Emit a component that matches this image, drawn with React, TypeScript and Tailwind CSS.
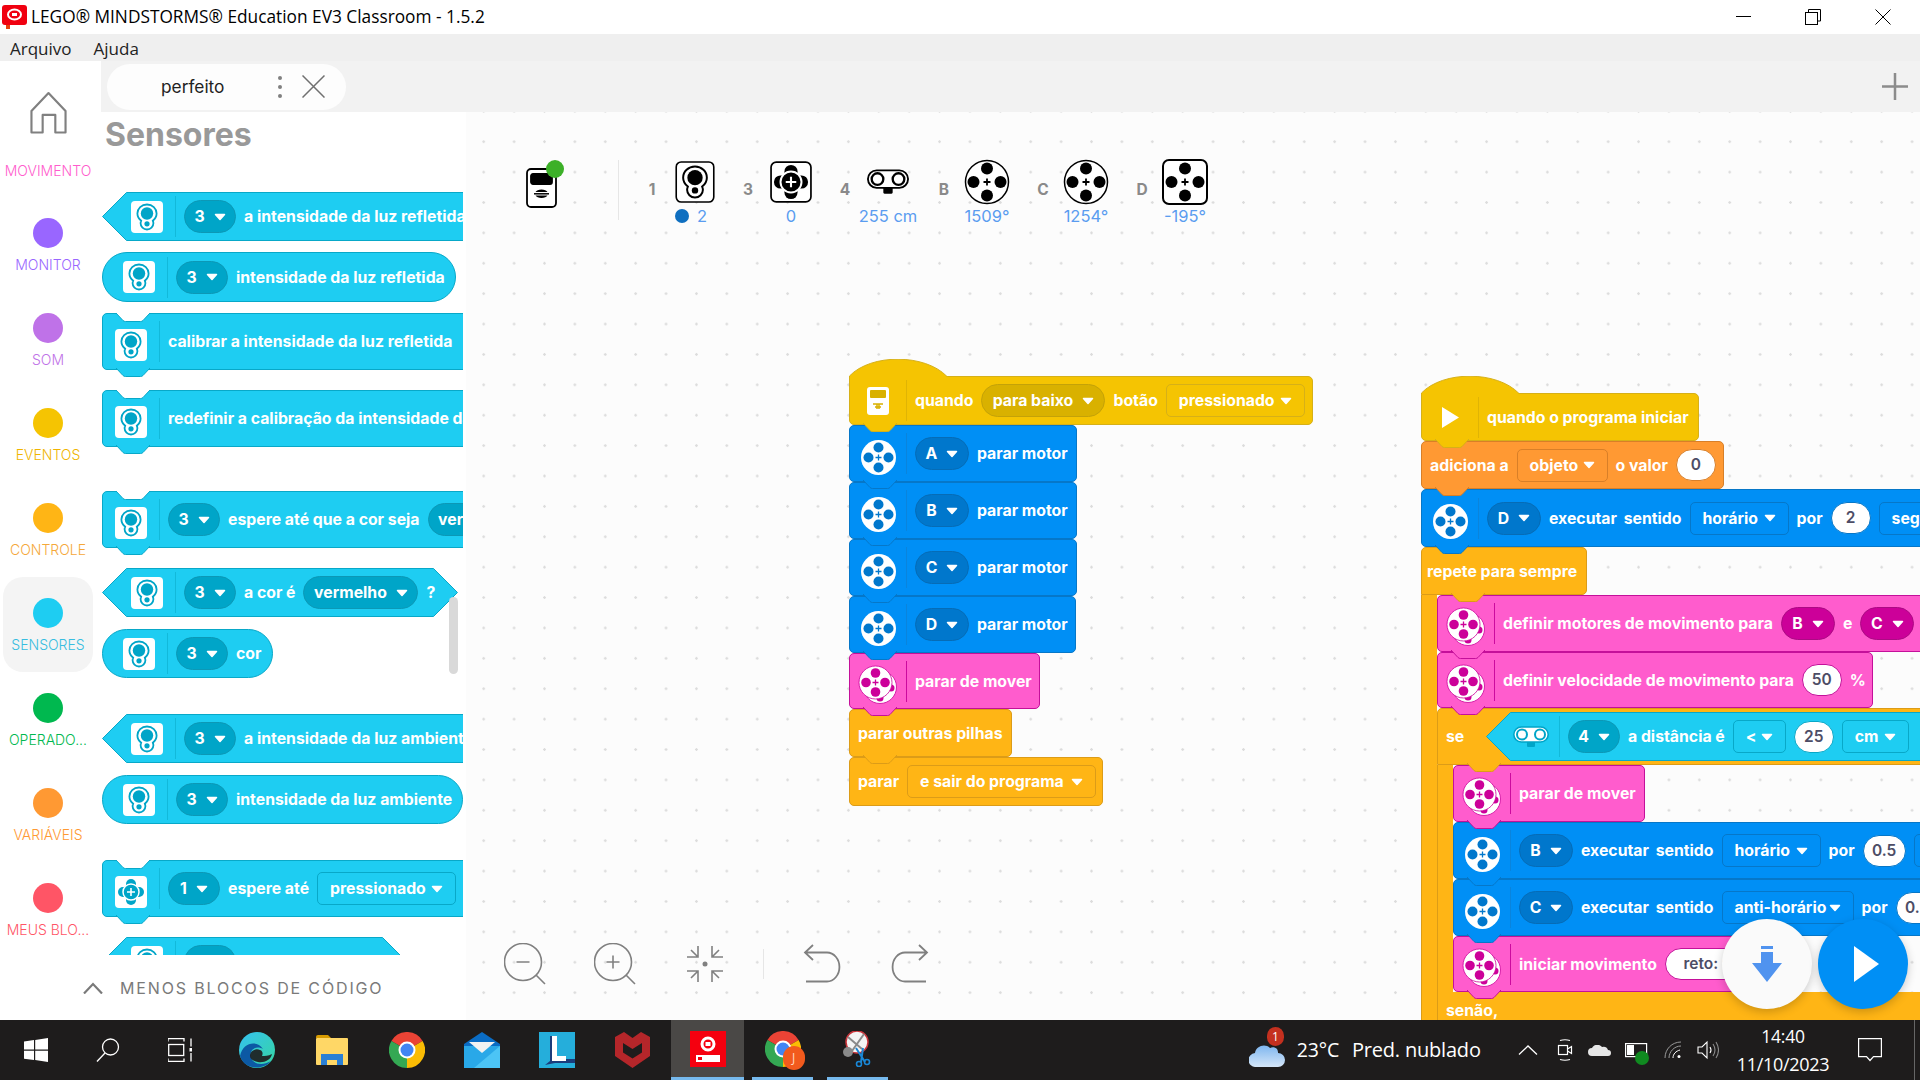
import type { ReactNode } from "react";
import clsx from "clsx";

type Theme = { bg: string; border: string; fill: string; stroke: string; rule: string; pill: string; ink: string };

const cyan: Theme = { bg: "bg-[#1ecdf2]", border: "border-[#08a8c8]", fill: "#1ecdf2", stroke: "#08a8c8", rule: "bg-[#12b9da]", pill: "bg-[#00a5c8] border-[#0c98b6]", ink: "#00a5c8" };
const blue: Theme = { bg: "bg-[#008ff5]", border: "border-[#0677c8]", fill: "#008ff5", stroke: "#0677c8", rule: "bg-[#0a84dc]", pill: "bg-[#0077cc] border-[#066cb6]", ink: "#0077cc" };
const pink: Theme = { bg: "bg-[#ff5ccd]", border: "border-[#c4109a]", fill: "#ff5ccd", stroke: "#c4109a", rule: "bg-[#cc0a9e]", pill: "bg-[#cc0099] border-[#ac0a84]", ink: "#cc0099" };
const yellow: Theme = { bg: "bg-[#f5c402]", border: "border-[#d6b018]", fill: "#f5c402", stroke: "#d6b018", rule: "bg-[#e0b404]", pill: "bg-[#d9b100] border-[#c4a208]", ink: "#d9b100" };
const amber: Theme = { bg: "bg-[#ffb515]", border: "border-[#dc9c18]", fill: "#ffb515", stroke: "#dc9c18", rule: "bg-[#e5a214]", pill: "bg-[#e59e10] border-[#cf9010]", ink: "#e59e10" };
const orange: Theme = { bg: "bg-[#ff9933]", border: "border-[#d87f28]", fill: "#ff9933", stroke: "#d87f28", rule: "bg-[#e58a2c]", pill: "bg-[#e5842a] border-[#cc7524]", ink: "#e5842a" };

const txt = "whitespace-nowrap pt-px text-[15.8px] font-bold text-white";

function Caret() {
  return (
    <svg width="12" height="8" viewBox="0 0 12 8" className="shrink-0">
      <path d="M1.5 1.5h9L6 6.5z" fill="#fff" stroke="#fff" strokeWidth="1.5" strokeLinejoin="round" />
    </svg>
  );
}

function Pill({ t, label, className }: { t: Theme; label: string; className?: string }) {
  return (
    <div className={clsx("flex h-[33px] shrink-0 items-center justify-center gap-[9px] rounded-full border", t.pill, className ?? "w-[54px]")}>
      <span className={txt}>{label}</span>
      <Caret />
    </div>
  );
}

function Drop({ t, label, className }: { t: Theme; label: string; className: string }) {
  return (
    <div className={clsx("flex h-[33px] shrink-0 items-center justify-between rounded-[5px] border px-[12px]", t.bg, t.border, className)}>
      <span className={txt}>{label}</span>
      <Caret />
    </div>
  );
}

function Value({ label, t, className }: { label: string; t: Theme; className?: string }) {
  return (
    <div className={clsx("flex h-[32px] shrink-0 items-center justify-center whitespace-nowrap rounded-full border bg-white text-[15.5px] font-semibold text-[#4d4d66]", t.border, className ?? "w-[41px]")}>
      {label}
    </div>
  );
}

function Bump({ t, left }: { t: Theme; left: string }) {
  return (
    <svg width="34" height="10" viewBox="0 0 34 10" className={clsx("absolute -bottom-[9px] z-10", left)}>
      <path d="M0 0h34l-7 7.5q-1 1-2.5 1h-15q-1.5 0-2.5-1z" fill={t.fill} />
      <path d="M0 0l7 7.5q1 1 2.5 1h15q1.5 0 2.5-1l7-7.5" fill="none" stroke={t.stroke} />
    </svg>
  );
}

function Notch({ t, left }: { t: Theme; left: string }) {
  return (
    <svg width="34" height="10" viewBox="0 0 34 10" className={clsx("absolute -top-px", left)}>
      <path d="M0 0h34l-7 7.5q-1 1-2.5 1h-15q-1.5 0-2.5-1z" fill="#fff" />
      <path d="M0 0l7 7.5q1 1 2.5 1h15q1.5 0 2.5-1l7-7.5" fill="none" stroke={t.stroke} />
    </svg>
  );
}

// the coloured cell with the icon and the thin rule after it
function IconCell({ t, icon, className }: { t: Theme; icon: ReactNode; className: string }) {
  return (
    <>
      <div className={clsx("flex shrink-0 items-center justify-center", className)}>{icon}</div>
      <div className={clsx("mr-[8px] h-[41px] w-px shrink-0", t.rule)} />
    </>
  );
}

function Stack({ t, className, icon, notch, bump = "left-[13px]", noBump, cell = "w-[56px] pt-[7px]", children }: { t: Theme; className: string; icon?: ReactNode; notch?: boolean; bump?: string; noBump?: boolean; cell?: string; children: ReactNode }) {
  return (
    <div className={clsx("relative flex shrink-0 items-center gap-[8px] rounded-[5px] border", t.bg, t.border, className)}>
      {notch && <Notch t={t} left="left-[13px]" />}
      <div className="flex h-full items-center">
        {icon && <IconCell t={t} icon={icon} className={cell} />}
        <div className="flex items-center gap-[8px]">{children}</div>
      </div>
      {!noBump && <Bump t={t} left={bump} />}
    </div>
  );
}

function Hat({ t, className, icon, children }: { t: Theme; className: string; icon: ReactNode; children: ReactNode }) {
  return (
    <div className="relative mt-[17px]">
      <svg width="99" height="19" viewBox="0 0 99 19" className="absolute -top-[17px] left-0 z-10">
        <path d="M.5 18.5V17C22-5.5 76-5.5 98 17.5l1 1z" fill={t.fill} />
        <path d="M.5 18.5V17C22-5.5 76-5.5 98 17.5" fill="none" stroke={t.stroke} />
      </svg>
      <Stack t={t} className={clsx("rounded-tl-none", className)} icon={icon} cell="w-[56px]">
        {children}
      </Stack>
    </div>
  );
}

function Hex({ t, w, className, icon, children }: { t: Theme; w: number; className: string; icon: ReactNode; children: ReactNode }) {
  return (
    <div className={clsx("relative flex h-[49px] shrink-0 items-center", className)}>
      <svg width={w} height="49" className="absolute left-0 top-0">
        <polygon points={`.5,24.5 24.5,.5 ${w - 24.5},.5 ${w - 0.5},24.5 ${w - 24.5},48.5 24.5,48.5`} fill={t.fill} stroke={t.stroke} />
      </svg>
      <div className="relative flex h-full items-center">
        <IconCell t={t} icon={icon} className="w-[73px] pl-[17px]" />
        <div className="flex items-center gap-[8px]">{children}</div>
      </div>
    </div>
  );
}

function Round({ className, icon, children }: { className: string; icon: ReactNode; children: ReactNode }) {
  return (
    <div className={clsx("flex shrink-0 items-center rounded-full border", cyan.bg, cyan.border, className)}>
      <IconCell t={cyan} icon={icon} className="w-[64px] pl-[8px]" />
      <div className="flex items-center gap-[8px]">{children}</div>
    </div>
  );
}

function ColorShape({ c, thin }: { c: string; thin?: boolean }) {
  return (
    <>
      <path d="M16 3.5c5.4 0 9.6 4 9.6 9 0 3-1.6 5.400-3.800 7.200.4 1 .6 1.700.6 2.600 0 3.400-2.800 6.200-6.400 6.200s-6.400-2.800-6.400-6.200c0-.9.2-1.600.6-2.600-2.200-1.800-3.800-4.200-3.800-7.200 0-5 4.200-9 9.600-9z" fill="none" stroke={c} strokeWidth={thin ? 1.6 : 1.8} />
      <circle cx="16" cy="12.500" r="6.200" fill={c} />
      <circle cx="16" cy="22.800" r="2.600" fill={c} />
    </>
  );
}

function ColorIcon({ c }: { c: string }) {
  return (
    <svg width="32" height="32" viewBox="0 0 32 32" className="rounded-[4px] bg-white">
      <ColorShape c={c} />
    </svg>
  );
}

function ForceShape({ c, hole }: { c: string; hole: string }) {
  return (
    <>
      <rect x="11" y="3" width="10" height="26" rx="5" fill={c} />
      <rect x="3" y="11" width="26" height="10" rx="5" fill={c} />
      <circle cx="16" cy="16" r="8" fill={c} stroke={hole} strokeWidth="1.500" />
      <path d="M16 12v8M12 16h8" stroke={hole} strokeWidth="1.600" />
    </>
  );
}

function MotorIcon({ c }: { c: string }) {
  return (
    <svg width="35" height="35" viewBox="0 0 35 35">
      <circle cx="17.500" cy="17.500" r="17.500" fill="#fff" />
      <circle cx="17.500" cy="7.500" r="5" fill={c} />
      <circle cx="17.500" cy="27.500" r="5" fill={c} />
      <circle cx="7.500" cy="17.500" r="5" fill={c} />
      <circle cx="27.500" cy="17.500" r="5" fill={c} />
      <path d="M17.500 14.500v6M14.500 17.500h6" stroke={c} strokeWidth="1.300" />
    </svg>
  );
}

function MoveIcon() {
  const c = "#cc0099";
  return (
    <svg width="40" height="40" viewBox="0 0 40 40">
      <circle cx="22" cy="22" r="16.500" fill="#fff" stroke={c} strokeWidth=".8" />
      <circle cx="33" cy="23" r="3.500" fill={c} />
      <circle cx="22" cy="33" r="3.500" fill={c} />
      <circle cx="17.500" cy="17.500" r="16.500" fill="#fff" stroke={c} strokeWidth=".8" />
      <circle cx="17.500" cy="8" r="4.800" fill={c} />
      <circle cx="17.500" cy="27" r="4.800" fill={c} />
      <circle cx="8" cy="17.500" r="4.800" fill={c} />
      <circle cx="27" cy="17.500" r="4.800" fill={c} />
      <path d="M17.500 14.500v6M14.500 17.500h6" stroke={c} strokeWidth="1.300" />
    </svg>
  );
}

function DistanceIcon({ bg, fg }: { bg: string; fg: string }) {
  return (
    <svg width="36" height="24" viewBox="0 0 36 24">
      <rect x="14" y="15" width="8" height="7" rx="1" fill={bg === "#fff" ? fg : "#000"} />
      <rect x=".8" y="2" width="34.400" height="15" rx="7.500" fill={bg} stroke={fg} strokeWidth="1.600" />
      <circle cx="9" cy="9.500" r="5" fill="none" stroke={fg} strokeWidth="2" />
      <circle cx="27" cy="9.500" r="5" fill="none" stroke={fg} strokeWidth="2" />
    </svg>
  );
}

function BrickIcon() {
  return (
    <svg width="22" height="28" viewBox="0 0 22 28">
      <rect width="22" height="28" rx="3" fill="#fff" />
      <rect x="3" y="3" width="16" height="8" rx="1" fill="#d9b100" />
      <path d="M6 17h10M8 20h6M10 17v5M12 17v5" stroke="#d9b100" strokeWidth="1.500" />
    </svg>
  );
}

const colorIc = <ColorIcon c={cyan.ink} />;
const forceIc = (
  <svg width="32" height="32" viewBox="0 0 32 32" className="rounded-[4px] bg-white">
    <ForceShape c={cyan.ink} hole="#fff" />
  </svg>
);
const blueIc = <MotorIcon c={blue.ink} />;
const moveIc = <MoveIcon />;

function Home() {
  return (
    <svg width="37" height="43" viewBox="0 0 38 44" fill="none" stroke="#808080" strokeWidth="2.200" strokeLinejoin="round">
      <path d="M1.500 20.500 19 2l17.500 18.500V42.500H26V24.500H13V42.500H1.500z" />
    </svg>
  );
}

const railItems = [
  { label: "MONITOR", dot: "bg-[#9966ff]", text: "text-[#9966ff]" },
  { label: "SOM", dot: "bg-[#bf72e8]", text: "text-[#bf72e8]" },
  { label: "EVENTOS", dot: "bg-[#f5c402]", text: "text-[#f0b400]" },
  { label: "CONTROLE", dot: "bg-[#ffb515]", text: "text-[#f5a83a]" },
  { label: "SENSORES", dot: "bg-[#1ecdf2]", text: "text-[#38bde0]", active: true },
  { label: "OPERADO...", dot: "bg-[#00b84f]", text: "text-[#00b84f]" },
  { label: "VARIÁVEIS", dot: "bg-[#ff9933]", text: "text-[#ff9933]" },
  { label: "MEUS BLO...", dot: "bg-[#ff5566]", text: "text-[#ff5566]" },
];

function Rail() {
  return (
    <div className="flex w-[101px] shrink-0 flex-col bg-white">
      <div className="flex h-[136px] w-[96px] shrink-0 flex-col items-center">
        <div className="mt-[30px]">
          <Home />
        </div>
        <span className="mt-[27px] text-[14px] font-light leading-[20px] text-[#ff5ccd]">MOVIMENTO</span>
      </div>
      {railItems.map((it) => (
        <div key={it.label} className={clsx("ml-[3px] flex h-[95px] w-[90px] shrink-0 flex-col items-center rounded-[20px] pt-[21px]", it.active && "bg-[#f4f4f4]")}>
          <div className={clsx("h-[30px] w-[30px] rounded-full", it.dot)} />
          <span className={clsx("mt-[7px] whitespace-nowrap text-[14px] font-light leading-[20px]", it.text)}>{it.label}</span>
        </div>
      ))}
    </div>
  );
}

function Flyout() {
  return (
    <div className="relative flex w-[365px] shrink-0 flex-col bg-white">
      <div className="h-[80px] shrink-0 pl-[4px] pt-[4px] text-[32px] font-bold leading-[38px] text-[#999999]">Sensores</div>
      <div className="flex min-h-0 flex-1 flex-col overflow-hidden pl-px">
        <div className="w-[361px] shrink-0 overflow-hidden">
          <Hex t={cyan} w={420} className="w-[420px]" icon={colorIc}>
            <Pill t={cyan} label="3" className="w-[52px]" />
            <span className={txt}>a intensidade da luz refletida</span>
          </Hex>
        </div>
        <Round className="mt-[11px] h-[50px] w-[354px]" icon={colorIc}>
          <Pill t={cyan} label="3" className="w-[52px]" />
          <span className={txt}>intensidade da luz refletida</span>
        </Round>
        <div className="mt-[11px] h-[66px] w-[361px] shrink-0 overflow-hidden">
          <Stack t={cyan} notch className="h-[57px] w-[420px]" icon={colorIc}>
            <span className={txt}>calibrar a intensidade da luz refletida</span>
          </Stack>
        </div>
        <div className="mt-[11px] h-[66px] w-[361px] shrink-0 overflow-hidden">
          <Stack t={cyan} notch className="h-[57px] w-[420px]" icon={colorIc}>
            <span className={txt}>redefinir a calibração da intensidade da luz</span>
          </Stack>
        </div>
        <div className="mt-[35px] h-[66px] w-[361px] shrink-0 overflow-hidden">
          <Stack t={cyan} notch className="h-[57px] w-[420px]" icon={colorIc}>
            <Pill t={cyan} label="3" className="w-[52px]" />
            <span className={txt}>espere até que a cor seja</span>
            <Pill t={cyan} label="vermelho" className="w-[115px]" />
          </Stack>
        </div>
        <Hex t={cyan} w={356} className="mt-[11px] w-[356px]" icon={colorIc}>
          <Pill t={cyan} label="3" className="w-[52px]" />
          <span className={txt}>a cor é</span>
          <Pill t={cyan} label="vermelho" className="w-[115px]" />
          <span className={txt}>?</span>
        </Hex>
        <Round className="mt-[12px] h-[49px] w-[171px]" icon={colorIc}>
          <Pill t={cyan} label="3" className="w-[52px]" />
          <span className={txt}>cor</span>
        </Round>
        <div className="mt-[36px] w-[361px] shrink-0 overflow-hidden">
          <Hex t={cyan} w={420} className="w-[420px]" icon={colorIc}>
            <Pill t={cyan} label="3" className="w-[52px]" />
            <span className={txt}>a intensidade da luz ambiente</span>
          </Hex>
        </div>
        <Round className="mt-[12px] h-[49px] w-[361px]" icon={colorIc}>
          <Pill t={cyan} label="3" className="w-[52px]" />
          <span className={txt}>intensidade da luz ambiente</span>
        </Round>
        <div className="mt-[36px] h-[66px] w-[361px] shrink-0 overflow-hidden">
          <Stack t={cyan} notch className="h-[57px] w-[420px]" icon={forceIc}>
            <Pill t={cyan} label="1" className="w-[52px]" />
            <span className={txt}>espere até</span>
            <Drop t={cyan} label="pressionado" className="w-[139px]" />
          </Stack>
        </div>
        <Hex t={cyan} w={305} className="mt-[11px] w-[305px]" icon={colorIc}>
          <Pill t={cyan} label="1" className="w-[52px]" />
        </Hex>
      </div>
      <div className="-ml-[18px] flex h-[65px] shrink-0 items-center gap-[17px]">
        <svg width="20" height="12" viewBox="0 0 20 12" fill="none" stroke="#7a7a7a" strokeWidth="2.200">
          <path d="M1 11.500 10 2l9 9.500" />
        </svg>
        <span className="whitespace-nowrap text-[16px] tracking-[1.850px] text-[#7a7a7a]">MENOS BLOCOS DE CÓDIGO</span>
      </div>
      <div className="absolute left-[348px] top-[485px] h-[77px] w-[9px] rounded-full bg-[#d9d9d9]" />
    </div>
  );
}

function MotorRow({ label, className }: { label: string; className: string }) {
  return (
    <Stack t={blue} className={clsx("h-[57px]", className)} icon={blueIc}>
      <Pill t={blue} label={label} />
      <span className={txt}>parar motor</span>
    </Stack>
  );
}

function RunRow({ label, dir, dirW, value, valueW }: { label: string; dir: string; dirW: string; value: string; valueW: string }) {
  return (
    <Stack t={blue} className="h-[57px] w-[640px]" icon={blueIc}>
      <Pill t={blue} label={label} />
      <span className={clsx(txt, "[word-spacing:3px]")}>executar sentido</span>
      <Drop t={blue} label={dir} className={dirW} />
      <span className={txt}>por</span>
      <Value t={blue} label={value} className={valueW} />
      <Drop t={blue} label="segundos" className="w-[110px]" />
    </Stack>
  );
}

function FirstStack() {
  return (
    <div className="absolute left-[383px] top-[247px] flex flex-col items-start">
      <Hat t={yellow} className="h-[49px] w-[464px]" icon={<BrickIcon />}>
        <span className={txt}>quando</span>
        <Pill t={yellow} label="para baixo" className="w-[124px]" />
        <span className={txt}>botão</span>
        <Drop t={yellow} label="pressionado" className="w-[139px]" />
      </Hat>
      <MotorRow label="A" className="w-[228px]" />
      <MotorRow label="B" className="w-[228px]" />
      <MotorRow label="C" className="w-[228px]" />
      <MotorRow label="D" className="w-[227px]" />
      <Stack t={pink} className="h-[56px] w-[191px]" icon={moveIc}>
        <span className={txt}>parar de mover</span>
      </Stack>
      <Stack t={amber} className="h-[48px] w-[163px] pl-[8px]">
        <span className={txt}>parar outras pilhas</span>
      </Stack>
      <Stack t={amber} className="h-[49px] w-[254px] pl-[8px]" noBump>
        <span className={txt}>parar</span>
        <Drop t={amber} label="e sair do programa" className="w-[189px]" />
      </Stack>
    </div>
  );
}

function SecondStack() {
  return (
    <div className="absolute left-[955px] top-[264px] flex flex-col items-start">
      <Hat t={yellow} className="h-[48px] w-[278px]" icon={
        <svg width="17" height="21" viewBox="0 0 17 21"><path d="M0 0l17 10.500L0 21z" fill="#fff" /></svg>
      }>
        <span className={txt}>quando o programa iniciar</span>
      </Hat>
      <Stack t={orange} className="h-[48px] w-[303px] pl-[8px]">
        <span className={txt}>adiciona a</span>
        <Drop t={orange} label="objeto" className="w-[91px]" />
        <span className={txt}>o valor</span>
        <Value t={orange} label="0" className="w-[40px]" />
      </Stack>
      <Stack t={blue} className="h-[58px] w-[640px]" icon={blueIc}>
        <Pill t={blue} label="D" />
        <span className={clsx(txt, "[word-spacing:3px]")}>executar sentido</span>
        <Drop t={blue} label="horário" className="w-[99px]" />
        <span className={txt}>por</span>
        <Value t={blue} label="2" className="w-[40px]" />
        <Drop t={blue} label="segundos" className="w-[110px]" />
      </Stack>
      <Stack t={amber} className="z-[1] h-[48px] w-[166px] rounded-bl-none pl-[5px]" bump="left-[29px]">
        <span className={txt}>repete para sempre</span>
      </Stack>
      <div className="flex items-stretch">
        <div className={clsx("w-[16px] shrink-0 border-l", amber.bg, amber.border)} />
        <div className="flex flex-col items-start">
          <Stack t={pink} className="h-[57px] w-[640px]" icon={moveIc}>
            <span className={txt}>definir motores de movimento para</span>
            <Pill t={pink} label="B" />
            <span className={txt}>e</span>
            <Pill t={pink} label="C" />
          </Stack>
          <Stack t={pink} className="h-[56px] w-[436px]" icon={moveIc}>
            <span className={txt}>definir velocidade de movimento para</span>
            <Value t={pink} label="50" className="w-[40px]" />
            <span className={txt}>%</span>
          </Stack>
          <Stack t={amber} className="h-[57px] w-[640px] rounded-bl-none pl-[8px]" bump="left-[29px]">
            <span className={clsx(txt, "w-[32px]")}>se</span>
            <Hex t={cyan} w={640} className="w-[640px]" icon={<DistanceIcon bg="#fff" fg={cyan.ink} />}>
              <Pill t={cyan} label="4" className="w-[52px]" />
              <span className={txt}>a distância é</span>
              <Drop t={cyan} label="<" className="w-[53px]" />
              <Value t={cyan} label="25" className="w-[40px]" />
              <Drop t={cyan} label="cm" className="w-[67px]" />
            </Hex>
          </Stack>
          <div className="flex items-stretch">
            <div className={clsx("w-[16px] shrink-0 border-l", amber.bg, amber.border)} />
            <div className="flex flex-col items-start">
              <Stack t={pink} className="h-[57px] w-[192px]" icon={moveIc}>
                <span className={txt}>parar de mover</span>
              </Stack>
              <RunRow label="B" dir="horário" dirW="w-[99px]" value="0.5" valueW="w-[43px]" />
              <RunRow label="C" dir="anti-horário" dirW="w-[132px]" value="0.5" valueW="w-[43px]" />
              <Stack t={pink} className="h-[56px] w-[330px]" icon={moveIc}>
                <span className={txt}>iniciar movimento</span>
                <Value t={pink} label="reto: 0" className="w-[100px] pr-[14px]" />
              </Stack>
            </div>
          </div>
          <div className={clsx("h-[60px] w-[640px] border-l pl-[8px] pt-[6px]", amber.bg, amber.border)}>
            <span className={txt}>senão,</span>
          </div>
        </div>
      </div>
    </div>
  );
}

function Sensor({ port, value, dot, className, children }: { port: string; value: string; dot?: boolean; className: string; children: ReactNode }) {
  return (
    <div className={clsx("flex shrink-0", className)}>
      <div className="h-[46px] w-[18px] pt-[8px] text-center text-[15.5px] font-bold leading-[46px] text-[#8a8a8a]">{port}</div>
      <div className="ml-[4px] flex w-[60px] flex-col items-center">
        <div className="flex h-[46px] items-center">{children}</div>
        <div className="flex h-[22px] items-center gap-[8px] whitespace-nowrap text-[16.5px] leading-none text-[#5a9cf0]">
          {dot && <span className="ml-[-8px] h-[14px] w-[14px] rounded-full bg-[#0f6fc0]" />}
          {value}
        </div>
      </div>
    </div>
  );
}

function WheelShape({ square }: { square?: boolean }) {
  return (
    <svg width="46" height="46" viewBox="0 0 46 46">
      {square ? <rect x="1" y="1" width="44" height="44" rx="6" fill="#fff" stroke="#000" strokeWidth="2" /> : <ellipse cx="23" cy="23" rx="21.500" ry="21.500" fill="#fff" stroke="#000" strokeWidth="1.500" />}
      <circle cx="23" cy="9.500" r="6" />
      <circle cx="23" cy="36.500" r="6" />
      <circle cx="9.500" cy="23" r="6" />
      <circle cx="36.500" cy="23" r="6" />
      <path d="M23 19.500v7M19.500 23h7" stroke="#000" strokeWidth="1.800" />
    </svg>
  );
}

function StatusBar() {
  return (
    <div className="absolute left-[60px] top-[47px] flex items-start">
      <div className="relative mt-[9px] w-[88px]">
        <svg width="31" height="40" viewBox="0 0 31 40" fill="none" stroke="#000" strokeWidth="1.800">
          <rect x="1" y="1" width="29" height="38" rx="4" fill="#fff" />
          <rect x="5" y="6" width="21" height="10" rx="2" fill="#000" />
          <path d="M15.500 21.500c3 0 5 1 6 2.500h-12c1-1.500 3-2.500 6-2.500zM9.500 27.500h12c-1 1.500-3 2.500-6 2.500s-5-1-6-2.500z" fill="#000" stroke="none" />
          <path d="M8 25.800h15" strokeWidth="1.500" />
        </svg>
        <span className="absolute left-[20px] -top-[8px] h-[18px] w-[18px] rounded-full bg-[#3cb028]" />
        <span className="absolute left-[92px] -top-[8px] h-[60px] w-px bg-[#e6e6e6]" />
      </div>
      <div className="ml-[29px] flex">
        <Sensor port="1" value="2" dot className="w-[96px]">
          <svg width="40" height="42" viewBox="0 0 32 34">
            <rect x=".8" y=".8" width="30.400" height="32.400" rx="4" fill="#fff" stroke="#000" strokeWidth="1.300" />
            <g transform="translate(0 1)">
              <ColorShape c="#000" thin />
            </g>
          </svg>
        </Sensor>
        <Sensor port="3" value="0" className="w-[97px]">
          <svg width="42" height="42" viewBox="0 0 32 32">
            <rect x=".8" y=".8" width="30.400" height="30.400" rx="4" fill="#fff" stroke="#000" strokeWidth="1.300" />
            <ForceShape c="#000" hole="#fff" />
          </svg>
        </Sensor>
        <Sensor port="4" value="255 cm" className="w-[99px]">
          <svg width="42" height="28" viewBox="0 0 36 24">
            <rect x="14" y="15" width="8" height="7" rx="1" fill="#000" />
            <rect x=".8" y="2" width="34.400" height="15" rx="7.500" fill="#fff" stroke="#000" strokeWidth="1.600" />
            <circle cx="9" cy="9.500" r="5" fill="none" stroke="#000" strokeWidth="2" />
            <circle cx="27" cy="9.500" r="5" fill="none" stroke="#000" strokeWidth="2" />
          </svg>
        </Sensor>
        <Sensor port="B" value="1509°" className="w-[99px]">
          <WheelShape />
        </Sensor>
        <Sensor port="C" value="1254°" className="w-[99px]">
          <WheelShape />
        </Sensor>
        <Sensor port="D" value="-195°" className="w-[99px]">
          <WheelShape square />
        </Sensor>
      </div>
    </div>
  );
}

function Tools() {
  const s = "#808080";
  return (
    <div className="absolute left-[38px] top-[831px] flex items-center">
      <svg width="42" height="42" viewBox="0 0 42 42" fill="none" stroke={s} strokeWidth="1.600">
        <circle cx="19" cy="19" r="18.500" />
        <path d="M32 32l9 9M12.500 19h13" />
      </svg>
      <svg width="42" height="42" viewBox="0 0 42 42" fill="none" stroke={s} strokeWidth="1.600" className="ml-[48px]">
        <circle cx="19" cy="19" r="18.500" />
        <path d="M32 32l9 9M12.500 19h13M19 12.500v13" />
      </svg>
      <svg width="38" height="38" viewBox="0 0 38 38" fill="none" stroke={s} strokeWidth="1.600" className="ml-[50px]">
        <path d="M12 1v11H1M5 5l7 7M26 1v11h11M33 5l-7 7M12 37V26H1M5 33l7-7M26 37V26h11M33 33l-7-7" />
        <circle cx="19" cy="19" r="2.500" fill={s} stroke="none" />
      </svg>
      <div className="ml-[39px] h-[30px] w-px bg-[#e6e6e6]" />
      <svg width="38" height="40" viewBox="0 0 38 40" fill="none" stroke={s} strokeWidth="1.800" className="ml-[39px]">
        <path d="M10 1L2 8.500l8 7.500M2 8.500h22a12 14 0 0 1 0 29H3" />
      </svg>
      <svg width="38" height="40" viewBox="0 0 38 40" fill="none" stroke={s} strokeWidth="1.800" className="ml-[50px]">
        <path d="M28 1l8 7.500-8 7.500M36 8.500H14a12 14 0 0 0 0 29h21" />
      </svg>
    </div>
  );
}

function RunButtons() {
  return (
    <div className="absolute left-[1256px] top-[807px] z-20 flex gap-[6px]">
      <div className="flex h-[90px] w-[90px] items-center justify-center rounded-full bg-[#fafafa] shadow-[0_3px_10px_rgba(0,0,0,0.2)]">
        <svg width="30" height="36" viewBox="0 0 30 36" fill="#5093ef">
          <rect x="9" y="0" width="12" height="3" />
          <path d="M9 6h12v11h9L15 36 0 17h9z" />
        </svg>
      </div>
      <div className="flex h-[90px] w-[90px] items-center justify-center rounded-full bg-[#008ff5] pl-[6px] shadow-[0_3px_10px_rgba(0,0,0,0.2)]">
        <svg width="25" height="36" viewBox="0 0 25 36">
          <path d="M0 0l25 18L0 36z" fill="#fff" />
        </svg>
      </div>
    </div>
  );
}

function ChromeIcon() {
  return (
    <svg width="36" height="36" viewBox="0 0 36 36">
      <path d="M2.400 9A18 18 0 0 1 33.600 9L18 18z" fill="#ea4335" />
      <path d="M33.600 9A18 18 0 0 1 18 36L18 18z" fill="#fbbc04" />
      <path d="M18 36A18 18 0 0 1 2.400 9L18 18z" fill="#34a853" />
      <circle cx="18" cy="18" r="8.500" fill="#fff" />
      <circle cx="18" cy="18" r="6.500" fill="#4285f4" />
    </svg>
  );
}

const taskIcons: { key: string; x: string; el: ReactNode }[] = [
  {
    key: "win",
    x: "ml-[24px]",
    el: (
      <svg width="24" height="24" viewBox="0 0 24 24" fill="#fff">
        <path d="M0 3.500l10-1.400v9.400H0zM11.200 1.900 24 0v11.500H11.200zM0 12.700h10v9.400l-10-1.400zM11.200 12.700H24V24l-12.800-1.900z" />
      </svg>
    ),
  },
  {
    key: "search",
    x: "ml-[48px]",
    el: (
      <svg width="24" height="24" viewBox="0 0 24 24" fill="none" stroke="#fff" strokeWidth="1.300">
        <circle cx="14.500" cy="9" r="8" />
        <path d="M9 15 1 23.500" />
      </svg>
    ),
  },
  {
    key: "tasks",
    x: "ml-[48px]",
    el: (
      <svg width="24" height="24" viewBox="0 0 24 24" fill="none" stroke="#fff" strokeWidth="1.300">
        <path d="M0 3.500V.7h16v2.800M0 20.500v2.800h16v-2.800" />
        <rect x=".7" y="6.500" width="15" height="11" />
        <path d="M23 .5v8M23 15v8.500" />
        <rect x="21.500" y="10" width="3" height="3.500" fill="#fff" stroke="none" />
      </svg>
    ),
  },
  {
    key: "edge",
    x: "ml-[47px]",
    el: (
      <svg width="36" height="36" viewBox="0 0 36 36">
        <defs>
          <linearGradient id="edgeA" x1="0" y1="0" x2="1" y2="1">
            <stop offset="0" stopColor="#35c1f1" />
            <stop offset="1" stopColor="#36d6a0" />
          </linearGradient>
        </defs>
        <circle cx="18" cy="18" r="18" fill="url(#edgeA)" />
        <path d="M1 24C4 10 18 8 24 17c-6-4-14 0-12 8 1 6 10 10 20 4-7 9-26 10-31-5z" fill="#0c59a4" />
        <path d="M11 24c0-5 5-8 10-6 3 1 3 4 2 6 3 0 6 0 10-2-1 6-8 9-14 8-5-1-8-3-8-6z" fill="#1e1c1c" opacity=".9" />
      </svg>
    ),
  },
  {
    key: "files",
    x: "ml-[41px]",
    el: (
      <svg width="32" height="30" viewBox="0 0 32 30">
        <path d="M0 2q0-2 2-2h10l3 3h-15z" fill="#d89b00" />
        <rect y="3" width="32" height="27" rx="1" fill="#ffd766" />
        <path d="M5 30V19h22v11h-6v-5h-10v5z" fill="#2a7fd5" />
      </svg>
    ),
  },
  { key: "chrome", x: "ml-[41px]", el: <ChromeIcon /> },
  {
    key: "mail",
    x: "ml-[39px]",
    el: (
      <svg width="36" height="36" viewBox="0 0 36 36">
        <path d="M0 12 18 0l18 12v24H0z" fill="#0a6cc4" />
        <path d="M0 14h36v22H0z" fill="#29a8e8" />
        <path d="M5 10h26l-13 11z" fill="#f2f2f2" />
        <path d="M36 14v22H10z" fill="#4cc4f5" />
      </svg>
    ),
  },
  {
    key: "lex",
    x: "ml-[39px]",
    el: (
      <svg width="36" height="36" viewBox="0 0 36 36">
        <rect width="36" height="36" fill="#25aedb" />
        <path d="M11 4v25l-5 4 10-2 20 0v-4H18V4z" fill="#1a3d7c" />
        <path d="M13 4h5v20h9v5H13z" fill="#fff" />
      </svg>
    ),
  },
  {
    key: "mc",
    x: "ml-[40px]",
    el: (
      <svg width="35" height="36" viewBox="0 0 35 36">
        <path d="M0 5l9-5 8.500 6L26 0l9 5v19L17.500 36 0 24zM8 11v9.500l9.500 6 9.500-6V11l-9.500 6z" fill="#b5262a" />
      </svg>
    ),
  },
];

function Taskbar() {
  return (
    <div className="relative flex h-[60px] shrink-0 items-center bg-[#1e1c1c] font-['Open_Sans',sans-serif] text-white">
      {taskIcons.map((i) => (
        <div key={i.key} className={clsx("shrink-0", i.x)}>
          {i.el}
        </div>
      ))}
      <div className="ml-[21px] flex h-full w-[73px] shrink-0 items-center justify-center border-b-[3px] border-[#76b9ed] bg-[#4a4846]">
        <svg width="36" height="36" viewBox="0 0 36 36">
          <rect width="36" height="36" fill="#f5000f" />
          <circle cx="18" cy="13" r="6" fill="none" stroke="#fff" strokeWidth="3" />
          <rect x="15.500" y="11" width="5" height="4" fill="#fff" />
          <rect x="6" y="24" width="24" height="7" fill="#fff" />
          <rect x="8" y="26" width="4" height="3" fill="#f5000f" />
        </svg>
      </div>
      <div className="ml-[8px] flex h-full w-[61px] shrink-0 items-center justify-center border-b-[3px] border-[#76b9ed]">
        <div className="relative">
          <ChromeIcon />
          <span className="absolute -bottom-[3px] -right-[4px] flex h-[24px] w-[22px] items-center justify-center rounded-full bg-[#f25a1d] text-[12px] text-[#ffd9c0]">J</span>
        </div>
      </div>
      <div className="ml-[14px] flex h-full w-[61px] shrink-0 items-center justify-center border-b-[3px] border-[#76b9ed]">
        <svg width="36" height="36" viewBox="0 0 36 36">
          <circle cx="17" cy="11" r="11" fill="#f4f4f4" stroke="#c8353b" strokeWidth="1.500" />
          <path d="M8 6l14 12M24 3 12 20" stroke="#8a8a8a" strokeWidth="2" />
          <circle cx="8" cy="21" r="5" fill="#8a8a8a" />
          <path d="M16 17l9 14M23 17l-2 14" stroke="#1a87d6" strokeWidth="2" fill="none" />
          <circle cx="19" cy="33" r="2.500" fill="none" stroke="#1a87d6" strokeWidth="1.600" />
          <circle cx="27" cy="31" r="2.500" fill="none" stroke="#1a87d6" strokeWidth="1.600" />
        </svg>
      </div>

      <div className="ml-auto flex h-full items-center">
        <div className="relative mr-[12px]">
          <svg width="36" height="26" viewBox="0 0 36 26" className="mt-[8px]">
            <defs>
              <linearGradient id="cloudA" x1="0" y1="0" x2="0" y2="1">
                <stop offset="0" stopColor="#7eb6ef" />
                <stop offset="1" stopColor="#d5e6f8" />
              </linearGradient>
            </defs>
            <path d="M7 26a7 7 0 0 1-1-14c1-7 10-10 15-5 2-1 5-1 7 1 1 2 1 3 1 4a7 7 0 0 1 0 14z" fill="url(#cloudA)" />
          </svg>
          <span className="absolute -top-[6px] left-[18px] flex h-[19px] w-[17px] items-center justify-center rounded-full bg-[#c4301f] text-[12px] leading-none">1</span>
        </div>
        <span className="text-[19.500px] leading-none tracking-[-0.2px]">23°C</span>
        <span className="ml-[13px] w-[127px] whitespace-nowrap text-[20px] leading-none tracking-[-0.2px]">Pred. nublado</span>
        <svg width="20" height="10" viewBox="0 0 20 10" fill="none" stroke="#fff" strokeWidth="1.300" className="ml-[39px]">
          <path d="M1 9.500 10 1l9 8.500" />
        </svg>
        <svg width="16" height="22" viewBox="0 0 16 22" fill="none" stroke="#fff" strokeWidth="1.200" className="ml-[19px]">
          <path d="M3 1.500q5-1.500 10 0M3 20.500q5 1.500 10 0" />
          <rect x="1.500" y="6.500" width="9" height="9" />
          <path d="M10.500 10l4-2.500v7l-4-2.500" />
        </svg>
        <svg width="24" height="11" viewBox="0 0 24 11" fill="#e6e6e6" className="ml-[15px]">
          <path d="M4 11a4 4 0 0 1 0-8 6 6 0 0 1 10-1 5 5 0 0 1 6 3 3 3 0 0 1 0 6z" />
        </svg>
        <div className="relative ml-[13px]">
          <svg width="23" height="15" viewBox="0 0 23 15" fill="none" stroke="#fff" strokeWidth="1.200">
            <rect x=".6" y=".6" width="21" height="13" />
            <rect x="2" y="2" width="7" height="10" fill="#fff" stroke="none" />
          </svg>
          <span className="absolute -bottom-[7px] left-[10px] h-[14px] w-[14px] rounded-full bg-[#108a20]" />
        </div>
        <svg width="18" height="18" viewBox="0 0 18 18" fill="none" stroke="#9a9a9a" strokeWidth="1" className="ml-[16px]">
          <path d="M1 17C1 8 8 1 17 1M5 17c0-6 5-12 12-12" />
          <path d="M9 17c0-4 3-7 7-8" stroke="#fff" />
          <circle cx="15" cy="15.500" r="1.500" fill="#fff" stroke="none" />
        </svg>
        <svg width="22" height="20" viewBox="0 0 22 20" fill="none" stroke="#fff" strokeWidth="1.100" className="ml-[15px]">
          <path d="M1 7h4l5-5v16l-5-5H1z" />
          <path d="M13 7q2 3 0 6" />
          <path d="M16 4q4 6 0 12M19 2q5 8 0 16" stroke="#8a8a8a" />
        </svg>
        <div className="ml-[14px] flex w-[100px] flex-col items-center">
          <span className="text-[17.500px] leading-[28px] tracking-[-0.2px]">14:40</span>
          <span className="text-[18px] leading-[28px] tracking-[-0.3px]">11/10/2023</span>
        </div>
        <svg width="24" height="24" viewBox="0 0 24 24" fill="none" stroke="#fff" strokeWidth="1.200" className="ml-[25px] mr-[38px]">
          <path d="M.6.6h22.800v18H15.500L12 22.500 8.500 18.600H.6z" />
        </svg>
      </div>
      <div className="absolute bottom-0 right-0 top-0 w-[6px] border-l border-[#666]" />
    </div>
  );
}

export default function App() {
  return (
    <div className="flex h-[1080px] w-[1920px] flex-col overflow-hidden bg-white font-['Inter',sans-serif]">
      <div className="flex h-[34px] shrink-0 items-center bg-white font-['Open_Sans',sans-serif] text-[17.300px] text-black">
        <svg width="25" height="24" viewBox="0 0 25 24" className="ml-[2px] mr-[4px]">
          <rect width="25" height="20" rx="3" fill="#f00010" />
          <ellipse cx="12.500" cy="9.500" rx="6.500" ry="5" fill="none" stroke="#fff" strokeWidth="2" />
          <rect x="10" y="8" width="5" height="3" fill="#fff" />
          <rect x="4" y="20" width="17" height="4" fill="#fff" />
          <rect x="4" y="20" width="4" height="4" fill="#e6400f" />
        </svg>
        <span className="whitespace-nowrap">LEGO® MINDSTORMS® Education EV3 Classroom - 1.5.2</span>
        <div className="ml-auto mr-[2px] flex">
          <div className="flex w-[70px] justify-center">
            <div className="mt-[7px] h-px w-[15px] bg-black" />
          </div>
          <div className="flex w-[70px] justify-center">
            <svg width="16" height="16" viewBox="0 0 16 16" fill="none" stroke="#000">
              <path d="M3.500 3V.5h12v11.500H13" />
              <rect x=".5" y="3.500" width="12" height="12" />
            </svg>
          </div>
          <div className="flex w-[70px] justify-center">
            <svg width="16" height="16" viewBox="0 0 16 16" fill="none" stroke="#000">
              <path d="M.5.500l15 15M15.500.5l-15 15" />
            </svg>
          </div>
        </div>
      </div>
      <div className="flex h-[27px] shrink-0 items-center gap-[22px] bg-[#efefef] pl-[10px] pt-[2px] font-['Open_Sans',sans-serif] text-[17px] text-[#222]">
        <span>Arquivo</span>
        <span>Ajuda</span>
      </div>
      <div className="flex min-h-0 flex-1">
        <Rail />
        <div className="flex min-w-0 flex-1 flex-col">
          <div className="flex h-[51px] shrink-0 items-center justify-between bg-[#f2f2f2] pl-[6px] pr-[12px]">
            <div className="relative flex h-[46px] w-[239px] items-center rounded-full bg-[#fdfdfd]">
              <span className="ml-[54px] text-[17.300px] text-[#222]">perfeito</span>
              <div className="absolute left-[171px] flex flex-col gap-[5px]">
                <span className="h-[4px] w-[4px] rounded-full bg-[#808080]" />
                <span className="h-[4px] w-[4px] rounded-full bg-[#808080]" />
                <span className="h-[4px] w-[4px] rounded-full bg-[#808080]" />
              </div>
              <svg width="23" height="23" viewBox="0 0 23 23" fill="none" stroke="#707070" strokeWidth="1.500" className="absolute left-[195px]">
                <path d="M.5.500l22 22M22.500.5l-22 22" />
              </svg>
            </div>
            <svg width="26" height="27" viewBox="0 0 26 27" fill="none" stroke="#8c8c8c" strokeWidth="2.500">
              <path d="M13 0v27M0 13.500h26" />
            </svg>
          </div>
          <div className="flex min-h-0 flex-1">
            <Flyout />
            <div className="relative min-w-0 flex-1 overflow-hidden bg-[#fcfcfc] bg-[radial-gradient(circle,#dcdcdc_1px,transparent_1.500px)] bg-[length:30.400px_30.400px] bg-[position:2.500px_14.500px]">
              <StatusBar />
              <FirstStack />
              <SecondStack />
              <Tools />
              <RunButtons />
            </div>
          </div>
        </div>
      </div>
      <Taskbar />
    </div>
  );
}
